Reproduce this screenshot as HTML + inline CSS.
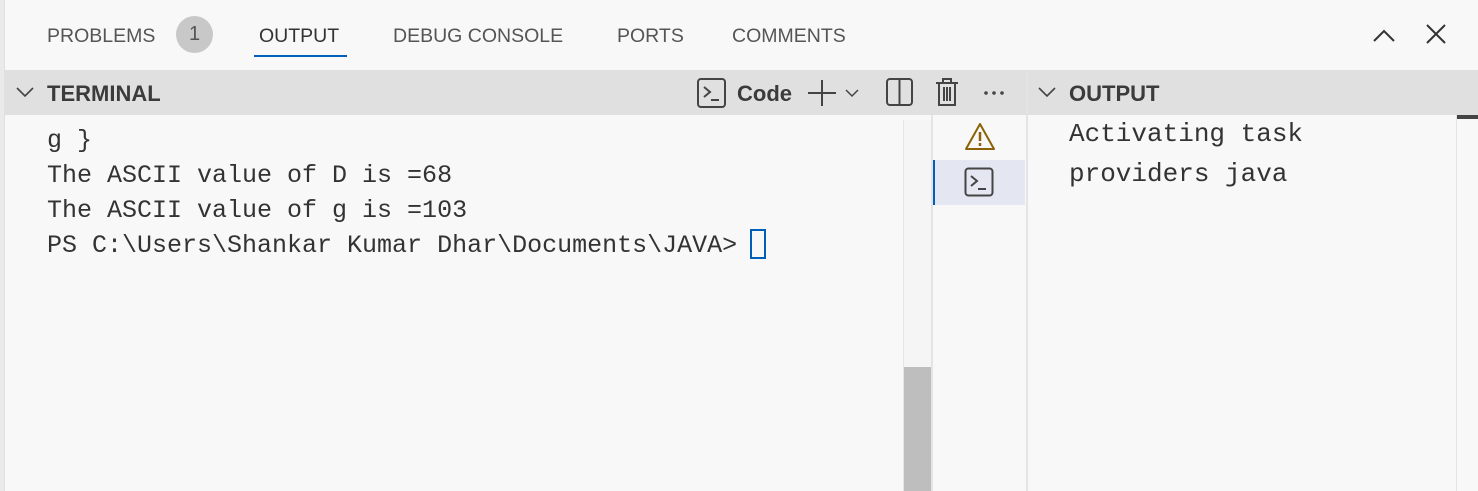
<!DOCTYPE html>
<html><head><style>
*{margin:0;padding:0;box-sizing:border-box}
body{width:1478px;height:491px;background:#f8f8f8;position:relative;overflow:hidden;font-family:"Liberation Sans",sans-serif;color:#424242}
.a{position:absolute}
.tab{position:absolute;top:25px;font-size:19.5px;color:#555;letter-spacing:0}
.mono{font-family:"Liberation Mono",monospace;font-size:25px;color:#333;position:absolute;white-space:pre}
</style></head><body>
<div class="a" style="left:0;top:0;width:4px;height:491px;background:#eaeaea"></div>
<div class="a" style="left:4px;top:0;width:1px;height:491px;background:#e0e0e0"></div>
<div class="tab" style="left:47px">PROBLEMS</div>
<div class="a" style="left:176px;top:16px;width:37px;height:37px;border-radius:50%;background:#c8c8c8;font-size:20px;color:#555;text-align:center;line-height:37px">1</div>
<div class="tab" style="left:259px;color:#333">OUTPUT</div>
<div class="a" style="left:254px;top:55px;width:93px;height:2px;background:#005fb8"></div>
<div class="tab" style="left:393px">DEBUG CONSOLE</div>
<div class="tab" style="left:617px">PORTS</div>
<div class="tab" style="left:732px">COMMENTS</div>
<svg class="a" style="left:1370px;top:22px" width="30" height="24"><path d="M4 19 L14 9 L24 19" stroke="#333" stroke-width="2" fill="none"/></svg>
<svg class="a" style="left:1424px;top:22px" width="24" height="24"><path d="M3 3 L21 21 M21 3 L3 21" stroke="#333" stroke-width="2" fill="none"/></svg>

<div class="a" style="left:5px;top:70px;width:1473px;height:45px;background:#e0e0e0"></div>
<svg class="a" style="left:14px;top:84px" width="24" height="16"><path d="M3 4 L11 12 L19 4" stroke="#444" stroke-width="1.6" fill="none"/></svg>
<div class="a" style="left:47px;top:81px;font-size:22px;font-weight:bold;color:#3b3b3b">TERMINAL</div>
<svg class="a" style="left:696px;top:77px" width="32" height="32"><rect x="2" y="2" width="27" height="28" rx="3" stroke="#444" stroke-width="2" fill="none"/><path d="M8 10 L14 15 L8 20 M15 23 L23 23" stroke="#444" stroke-width="2" fill="none"/></svg>
<div class="a" style="left:737px;top:81px;font-size:22px;font-weight:bold;color:#3b3b3b">Code</div>
<svg class="a" style="left:806px;top:78px" width="56" height="30"><path d="M16 2 V28 M2 15 H30" stroke="#444" stroke-width="2" fill="none"/><path d="M40 12 L46 18 L52 12" stroke="#444" stroke-width="1.5" fill="none"/></svg>
<svg class="a" style="left:885px;top:77px" width="30" height="32"><rect x="2" y="2" width="25" height="26" rx="3" stroke="#444" stroke-width="2" fill="none"/><path d="M14.5 2 V28" stroke="#444" stroke-width="2"/></svg>
<svg class="a" style="left:934px;top:76px" width="26" height="32"><path d="M2 7 H24 M9 7 V3 H17 V7 M5 7 V29 H21 V7 M10 11 V25 M13 11 V25 M16 11 V25" stroke="#444" stroke-width="2" fill="none"/></svg>
<svg class="a" style="left:983px;top:88px" width="30" height="10"><circle cx="3" cy="5" r="1.8" fill="#444"/><circle cx="11" cy="5" r="1.8" fill="#444"/><circle cx="19" cy="5" r="1.8" fill="#444"/></svg>
<svg class="a" style="left:1036px;top:84px" width="24" height="16"><path d="M3 4 L11 12 L19 4" stroke="#444" stroke-width="1.6" fill="none"/></svg>
<div class="a" style="left:1069px;top:81px;font-size:22px;font-weight:bold;color:#3b3b3b">OUTPUT</div>
<div class="a" style="left:1026px;top:70px;width:2px;height:421px;background:#e4e4e4"></div>

<div class="mono" style="left:47px;top:126px">g }</div>
<div class="mono" style="left:47px;top:161px">The ASCII value of D is =68</div>
<div class="mono" style="left:47px;top:196px">The ASCII value of g is =103</div>
<div class="mono" style="left:47px;top:231px">PS C:\Users\Shankar Kumar Dhar\Documents\JAVA&gt;</div>
<div class="a" style="left:750px;top:229px;width:16px;height:30px;border:2px solid #005fb8"></div>

<div class="a" style="left:903px;top:120px;width:28px;height:371px;background:#f5f5f5;border-left:1px solid #e6e6e6"></div>
<div class="a" style="left:904px;top:367px;width:27px;height:124px;background:#bebebe"></div>
<div class="a" style="left:931px;top:115px;width:2px;height:376px;background:#e4e4e4"></div>

<svg class="a" style="left:964px;top:121px" width="32" height="30"><path d="M16 3 L30 28 H2 Z" stroke="#8b6206" stroke-width="2" fill="none" stroke-linejoin="round"/><path d="M16 11 V20 M16 22 V25" stroke="#8b6206" stroke-width="2.5"/></svg>
<div class="a" style="left:933px;top:160px;width:92px;height:45px;background:#e4e6f1"></div>
<div class="a" style="left:933px;top:160px;width:2px;height:45px;background:#005fb8"></div>
<svg class="a" style="left:964px;top:167px" width="32" height="32"><rect x="1.5" y="1.5" width="27" height="27" rx="3" stroke="#444" stroke-width="2" fill="none"/><path d="M7 9 L13 14 L7 19 M14 22 L22 22" stroke="#444" stroke-width="2" fill="none"/></svg>

<div class="mono" style="left:1069px;top:119px;font-size:26px">Activating task</div>
<div class="mono" style="left:1069px;top:159px;font-size:26px">providers java</div>

<div class="a" style="left:1456px;top:115px;width:1px;height:376px;background:#e4e4e4"></div>
<div class="a" style="left:1457px;top:115px;width:21px;height:4px;background:#444"></div>
</body></html>
